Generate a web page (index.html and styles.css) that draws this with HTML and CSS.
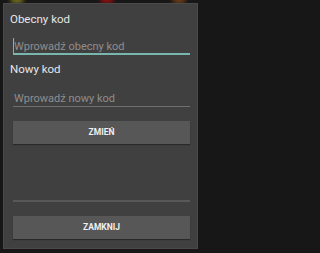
FILE: index.html
```html
<!DOCTYPE html>
<html lang="pl">
<head>
<meta charset="utf-8">
<link rel="stylesheet" href="styles.css">
</head>
<body>
<div class="backdrop">
  <span class="blob blob-yellow"></span>
  <span class="blob blob-red"></span>
  <span class="blob blob-orange"></span>
  <div class="dialog">
    <div class="label">Obecny kod</div>
    <div class="field focused"><span class="cursor"></span><span class="placeholder">Wprowadź obecny kod</span></div>
    <div class="label label-second">Nowy kod</div>
    <div class="field"><span class="placeholder">Wprowadź nowy kod</span></div>
    <div class="button btn-change">ZMIEŃ</div>
    <div class="divider"></div>
    <div class="button btn-close">ZAMKNIJ</div>
  </div>
</div>
</body>
</html>
```

FILE: styles.css
```css
html, body {
  margin: 0;
  padding: 0;
  background: #171717;
}
body {
  font-family: Roboto, "Noto Sans", "Liberation Sans", sans-serif;
  width: 202px;
  height: 253px;
  overflow: hidden;
}
.backdrop {
  position: relative;
  width: 202px;
  height: 253px;
  padding: 3px 4px 4px 3px;
  box-sizing: border-box;
}
.blob {
  position: absolute;
  top: -4px;
  width: 14px;
  height: 8px;
  border-radius: 50%;
  filter: blur(2px);
}
.blob-yellow { left: 10px; background: #6f6a1e; }
.blob-red { left: 100px; background: #8c1010; }
.blob-orange { left: 172px; background: #6b3a1a; }
.dialog {
  position: relative;
  height: 246px;
  background: #404040;
  border: 1px solid #4a4a4a;
  box-sizing: border-box;
  padding: 8px 7px 0 6px;
  display: flex;
  flex-direction: column;
}
.label {
  color: #e6e6e6;
  font-size: 11.5px;
  line-height: 14px;
  height: 14px;
  flex: none;
}
.label-second {
  margin-top: 7px;
}
.field {
  position: relative;
  flex: none;
  margin: 16px 0 0 3px;
  height: 14px;
  line-height: 14px;
  font-size: 11px;
  padding-left: 1px;
  border-bottom: 1px solid #6e6e6e;
}
.field.focused {
  margin-top: 13px;
  height: 14px;
  line-height: 16px;
  border-bottom: 2px solid #79b7ae;
}
.placeholder {
  color: #8e8e8e;
}
.cursor {
  position: absolute;
  left: 0;
  top: -1px;
  width: 1px;
  height: 15px;
  background: #79b7ae;
}
.button {
  flex: none;
  margin-left: 3px;
  height: 23px;
  line-height: 23px;
  background: #575757;
  color: #f0f0f0;
  font-size: 8.5px;
  font-weight: bold;
  text-align: center;
  box-shadow: 0 1px 1px rgba(0,0,0,0.35);
}
.btn-change {
  margin-top: 14px;
}
.divider {
  flex: none;
  margin: 56px 0 0 3px;
  height: 2px;
  background: #585858;
}
.btn-close {
  margin-top: 14px;
}
```
